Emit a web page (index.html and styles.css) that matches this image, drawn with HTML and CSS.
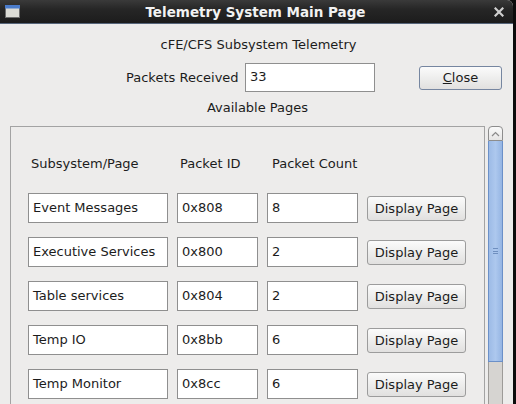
FILE: index.html
```html
<!DOCTYPE html>
<html lang="en">
<head>
    <meta charset="UTF-8">
    <title>Telemetry System Main Page</title>
    <link rel="stylesheet" href="styles.css">
</head>
<body>
    <div class="window">
        <header class="titlebar">
            <svg class="win-icon" width="16" height="14" viewBox="0 0 16 14">
                <rect x="0.5" y="0.5" width="14" height="12" fill="#dcdcd6" stroke="#6d6d6d"/>
                <rect x="0.5" y="0.5" width="14" height="2.5" fill="#4a7ccc" stroke="#4a7ccc"/>
            </svg>
            <h1 class="title">Telemetry System Main Page</h1>
            <svg class="win-close" width="10" height="10" viewBox="0 0 10 10">
                <path d="M1.5 1.5 L8.5 8.5 M8.5 1.5 L1.5 8.5" stroke="#cfcfcf" stroke-width="2.2" stroke-linecap="square"/>
            </svg>
        </header>

        <main class="content">
            <p class="subtitle">cFE/CFS Subsystem Telemetry</p>

            <div class="packets-row">
                <label class="packets-label" for="packets">Packets Received</label>
                <div class="field packets-field" id="packets">33</div>
                <button class="btn close-btn"><u>C</u>lose</button>
            </div>

            <p class="pages-title">Available Pages</p>

            <div class="pages-area">
                <div class="pages-panel">
                    <div class="pages-grid">
                        <div class="col-head">Subsystem/Page</div>
                        <div class="col-head">Packet ID</div>
                        <div class="col-head">Packet Count</div>
                        <div></div>

                        <div class="field">Event Messages</div>
                        <div class="field">0x808</div>
                        <div class="field">8</div>
                        <button class="btn page-btn">Display Page</button>

                        <div class="field">Executive Services</div>
                        <div class="field">0x800</div>
                        <div class="field">2</div>
                        <button class="btn page-btn">Display Page</button>

                        <div class="field">Table services</div>
                        <div class="field">0x804</div>
                        <div class="field">2</div>
                        <button class="btn page-btn">Display Page</button>

                        <div class="field">Temp IO</div>
                        <div class="field">0x8bb</div>
                        <div class="field">6</div>
                        <button class="btn page-btn">Display Page</button>

                        <div class="field">Temp Monitor</div>
                        <div class="field">0x8cc</div>
                        <div class="field">6</div>
                        <button class="btn page-btn">Display Page</button>
                    </div>
                </div>

                <div class="scrollbar">
                    <div class="scroll-up">
                        <svg width="9" height="6" viewBox="0 0 9 6"><path d="M1 5 L4.5 1.5 L8 5" fill="none" stroke="#8a8a8a" stroke-width="1.2"/></svg>
                    </div>
                    <div class="scroll-thumb"><span class="grip"></span></div>
                    <div class="scroll-trough"></div>
                </div>
            </div>
        </main>
    </div>
</body>
</html>
```

FILE: styles.css
```css
:root {
    --window-bg: #edeceb;
    --text: #1c1c1c;
    --field-border: #8f8f8f;
    --panel-border: #a3a3a3;
    --btn-border: #9c9c9c;
}

* {
    margin: 0;
    padding: 0;
    box-sizing: border-box;
}

html, body {
    width: 516px;
    height: 404px;
    overflow: hidden;
}

body {
    background: #0c0c0c;
    font-family: "DejaVu Sans", sans-serif;
    font-size: 13px;
    color: var(--text);
}

.window {
    width: 513px;
    height: 404px;
    background: var(--window-bg);
    display: flex;
    flex-direction: column;
    border-top-right-radius: 6px;
    overflow: hidden;
}

.titlebar {
    height: 24px;
    flex: none;
    display: flex;
    align-items: center;
    padding: 0 9px 0 5px;
    background: linear-gradient(#3a3a3a, #262626 40%, #1c1c1c);
    border-bottom: 1px solid #56657a;
}

.win-icon {
    flex: none;
}

.title {
    flex: 1;
    text-align: center;
    font-size: 13.5px;
    font-weight: bold;
    color: #f2f2f2;
    margin-right: 4px;
}

.win-close {
    flex: none;
}

.content {
    flex: 1;
    display: flex;
    flex-direction: column;
}

.subtitle {
    text-align: center;
    line-height: 16px;
    margin-top: 13px;
    padding-left: 4px;
}

.packets-row {
    display: flex;
    align-items: center;
    padding-left: 126px;
    margin-top: 10px;
    height: 29px;
}

.packets-label {
    width: 114px;
}

.field {
    background: #fff;
    border: 1px solid var(--field-border);
    height: 30px;
    display: flex;
    align-items: center;
    padding: 0 0 2px 4px;
    white-space: nowrap;
}

.packets-field {
    width: 130px;
    height: 29px;
    margin-left: 5px;
}

.btn {
    font-family: "DejaVu Sans", sans-serif;
    font-size: 13px;
    color: var(--text);
    background: linear-gradient(#fbfbfb, #ebebea 60%, #e1e0df);
    border: 1px solid var(--btn-border);
    border-radius: 3px;
}

.close-btn {
    width: 83px;
    height: 24px;
    margin-left: 44px;
    border-color: #7686a0;
}

.pages-title {
    text-align: center;
    line-height: 16px;
    margin-top: 8px;
    padding-left: 2px;
}

.pages-area {
    display: flex;
    margin-top: 10px;
    margin-left: 10px;
    gap: 3px;
    flex: 1;
}

.pages-panel {
    width: 475px;
    height: 320px;
    border: 1px solid var(--panel-border);
    padding: 22px 0 0 17px;
}

.pages-grid {
    display: grid;
    grid-template-columns: 140px 81px 91px 99px;
    grid-auto-rows: 30px;
    column-gap: 9px;
    row-gap: 14px;
    align-items: center;
}

.col-head {
    padding: 0 0 1px 3px;
}

.col-head:nth-child(3) {
    padding-left: 5px;
}

.page-btn {
    height: 25px;
}

.scrollbar {
    width: 15px;
    display: flex;
    flex-direction: column;
}

.scroll-up {
    height: 15px;
    flex: none;
    display: flex;
    align-items: center;
    justify-content: center;
    background: linear-gradient(#fafafa, #e6e5e4);
    border: 1px solid #8d8d8d;
    border-radius: 4px 4px 0 0;
}

.scroll-thumb {
    height: 221px;
    flex: none;
    display: flex;
    align-items: center;
    justify-content: center;
    background: linear-gradient(90deg, #9dbbe6, #adc8ee 50%, #95b5e3);
    border: 1px solid #6b90c8;
    border-top: none;
}

.grip {
    width: 5px;
    height: 6px;
    border-top: 1px solid #6f8fbf;
    border-bottom: 1px solid #6f8fbf;
    position: relative;
}

.grip::after {
    content: "";
    position: absolute;
    left: 0;
    right: 0;
    top: 2px;
    border-top: 1px solid #6f8fbf;
}

.scroll-trough {
    flex: 1;
    background: #d6d4d1;
    border-left: 1px solid #9d9b98;
    border-right: 1px solid #9d9b98;
}
```
